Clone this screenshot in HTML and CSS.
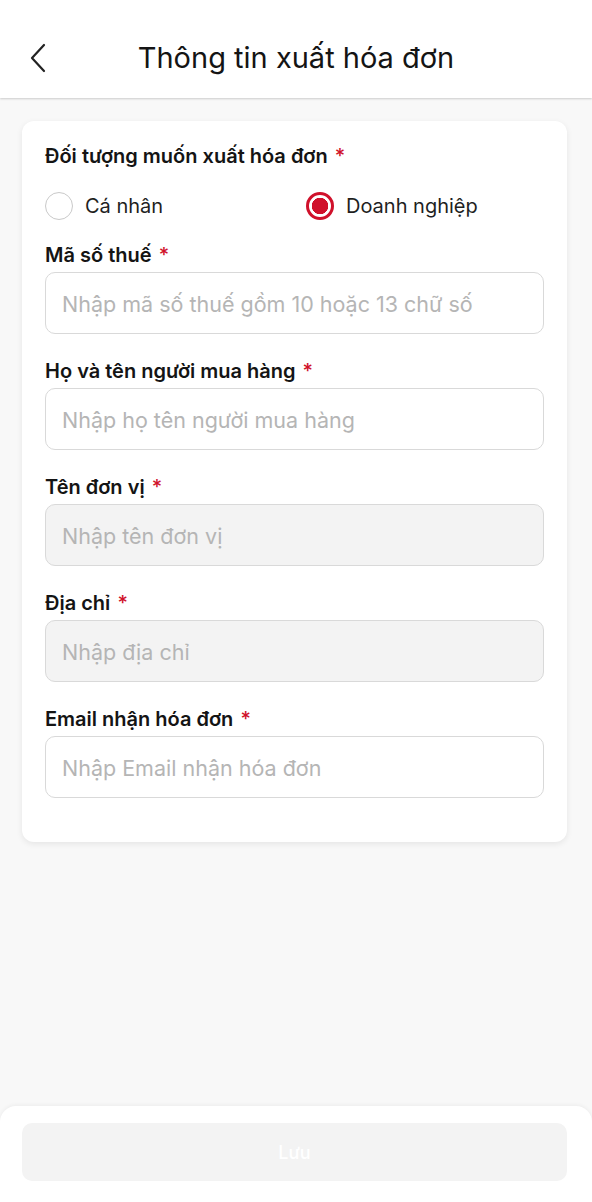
FILE: index.html
```html
<!DOCTYPE html>
<html lang="vi">
<head>
<meta charset="utf-8">
<title>Thông tin xuất hóa đơn</title>
<link rel="stylesheet" href="styles.css">
</head>
<body>
<div class="page">
  <header class="header">
    <button class="back" aria-label="Quay lại">
      <svg width="20" height="30" viewBox="0 0 20 30"><polyline points="14,2 2,15 14,28" fill="none" stroke="#222" stroke-width="2.2" stroke-linecap="round" stroke-linejoin="round"/></svg>
    </button>
    <h1 class="title">Thông tin xuất hóa đơn</h1>
    <span class="spacer"></span>
  </header>

  <main class="card">
    <div class="label">Đối tượng muốn xuất hóa đơn <span class="req">*</span></div>
    <div class="radios">
      <label class="radio"><span class="dot"></span>Cá nhân</label>
      <label class="radio checked"><span class="dot"></span>Doanh nghiệp</label>
    </div>

    <div class="field">
      <div class="label">Mã số thuế <span class="req">*</span></div>
      <div class="input">Nhập mã số thuế gồm 10 hoặc 13 chữ số</div>
    </div>
    <div class="field">
      <div class="label">Họ và tên người mua hàng <span class="req">*</span></div>
      <div class="input">Nhập họ tên người mua hàng</div>
    </div>
    <div class="field">
      <div class="label">Tên đơn vị <span class="req">*</span></div>
      <div class="input disabled">Nhập tên đơn vị</div>
    </div>
    <div class="field">
      <div class="label">Địa chỉ <span class="req">*</span></div>
      <div class="input disabled">Nhập địa chỉ</div>
    </div>
    <div class="field">
      <div class="label">Email nhận hóa đơn <span class="req">*</span></div>
      <div class="input">Nhập Email nhận hóa đơn</div>
    </div>
  </main>

  <footer class="footer">
    <button class="save">Lưu</button>
  </footer>
</div>
</body>
</html>
```
FILE: styles.css
```css
* { box-sizing: border-box; }
html, body { margin: 0; padding: 0; }
body {
  background: #f8f8f8;
  font-family: Inter, "Noto Sans", "DejaVu Sans", sans-serif;
  color: #1a1a1a;
}
.page {
  min-height: 100vh;
  display: flex;
  flex-direction: column;
}
.header {
  height: 98px;
  background: #fff;
  box-shadow: 0 1px 2px rgba(0,0,0,0.18);
  display: grid;
  grid-template-columns: 60px 1fr 60px;
  align-items: center;
  padding-top: 17px;
}
.back {
  border: 0;
  background: none;
  padding: 0 0 0 30px;
  display: flex;
  align-items: center;
  height: 30px;
}
.title {
  margin: 0;
  text-align: center;
  font-size: 29px;
  font-weight: 400;
  color: #141414;
}
.card {
  margin: 23px 25px 0 22px;
  background: #fff;
  border-radius: 12px;
  box-shadow: 0 2px 6px rgba(0,0,0,0.08);
  padding: 23px 23px 44px 23px;
}
.label {
  font-size: 20px;
  line-height: 24px;
  font-weight: 600;
  color: #141414;
}
.req { color: #d0112b; font-weight: 500; margin-left: 2px; }
.radios {
  display: grid;
  grid-template-columns: 261px 1fr;
  margin-top: 24px;
}
.radio {
  display: flex;
  align-items: center;
  gap: 12px;
  font-size: 20px;
  line-height: 28px;
  color: #1f1f1f;
}
.dot {
  width: 28px;
  height: 28px;
  border-radius: 50%;
  border: 1.5px solid #c9c9c9;
  flex: none;
}
.radio.checked .dot {
  border: 3px solid #d0112b;
  background: radial-gradient(circle, #d0112b 0 8px, #fff 8.5px);
}
.field { margin-top: 23px; }
.field + .field { margin-top: 25px; }
.input {
  margin-top: 5px;
  height: 62px;
  border: 1px solid #d9d9d9;
  border-radius: 10px;
  display: flex;
  align-items: center;
  padding-left: 16px;
  padding-top: 2px;
  font-size: 21.5px;
  color: #b5b5b5;
  background: #fff;
}
.input.disabled { background: #f3f3f3; }
.footer {
  margin-top: auto;
  background: #fff;
  border-radius: 16px 16px 0 0;
  box-shadow: 0 -1px 4px rgba(0,0,0,0.05);
  padding: 17px 25px 21px 22px;
}
.save {
  width: 100%;
  height: 58px;
  border: 0;
  border-radius: 10px;
  background: #f3f3f3;
  color: #fff;
  font-family: inherit;
  font-size: 18px;
  font-weight: 500;
}
```
